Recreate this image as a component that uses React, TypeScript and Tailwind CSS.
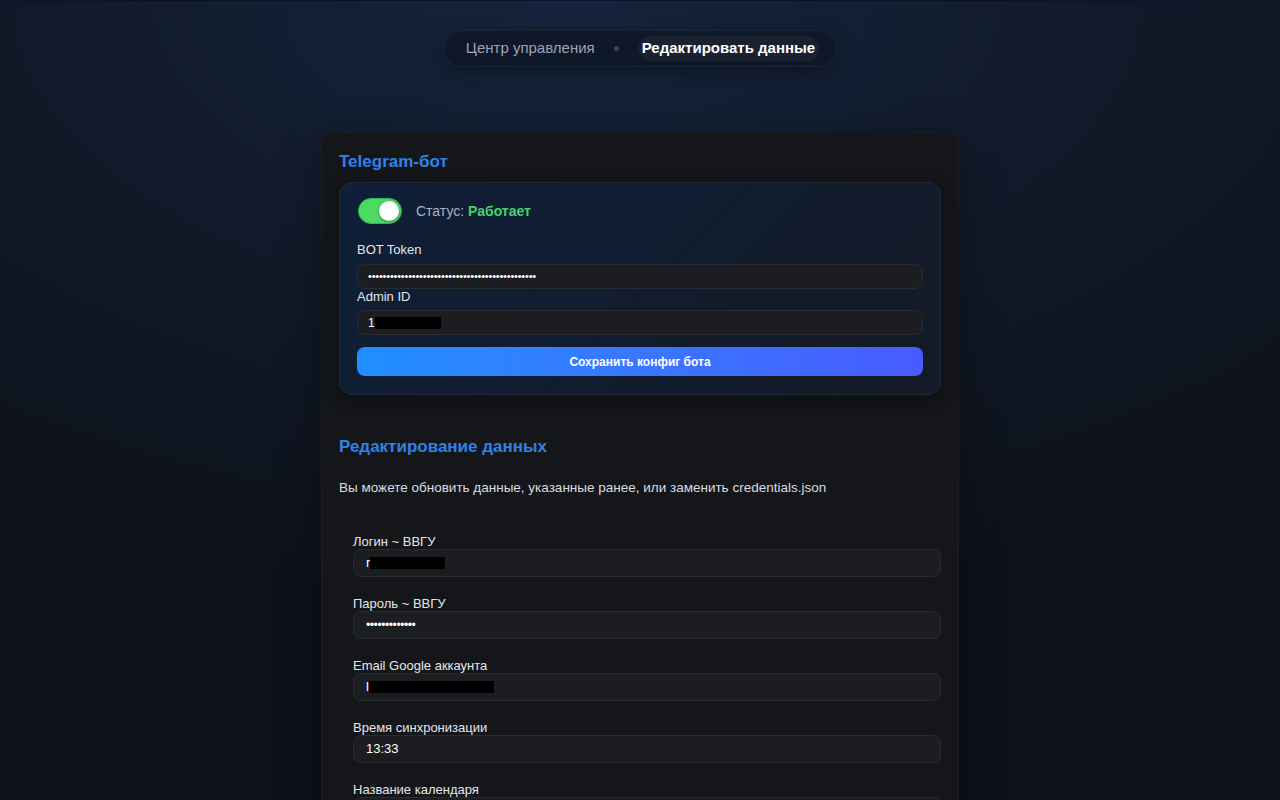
import React from "react"

const font = { fontFamily: '"Liberation Sans", Arial, sans-serif' }

const Redacted = ({ lead, width }: { lead: string; width: number }) => (
  <span className="inline-flex items-center">
    <span>{lead}</span>
    <span
      className="inline-block h-[12px] bg-black"
      style={{ width }}
    />
  </span>
)

const Field = ({
  label,
  children
}: {
  label: string
  children?: React.ReactNode
}) => (
  <div className="flex flex-col">
    <label className="text-[13px] leading-[14px] text-[#e4e6ea]">{label}</label>
    <div className="mt-0 h-[28px] rounded-lg border border-[#2a2b30] bg-[#1c1d21] px-3 flex items-center text-[13px] text-white">
      {children}
    </div>
  </div>
)

export default function App() {
  return (
    <div
      style={font}
      className="min-h-screen w-full border-t border-[#0a1426] bg-[radial-gradient(ellipse_90%_60%_at_45%_0%,#15243d_0%,#111a2a_45%,#0d1118_100%)] pb-16"
    >
      <nav className="flex justify-center pt-[29px]">
        <div className="flex h-[37px] items-center rounded-full border border-white/5 bg-[#0e1828] pl-[22px] pr-[17px] shadow-[0_6px_20px_rgba(0,0,0,0.35)]">
          <span className="text-[15px] text-[#9ba4b4]">Центр управления</span>
          <span className="mx-[19px] h-[5px] w-[5px] rounded-full bg-[#3d4657]" />
          <span className="rounded-full bg-[#1a2232] px-[4px] py-[1px] text-[15px] font-bold text-white">
            Редактировать данные
          </span>
        </div>
      </nav>

      <main className="mx-auto mt-[65px] w-[638px] rounded-xl border border-white/[0.03] bg-[#151619] px-[17px] pt-[17px] pb-10 shadow-[0_10px_40px_rgba(0,0,0,0.35)]">
        <h2 className="text-[17px] font-bold leading-6 text-[#2e82ea]">Telegram-бот</h2>

        <section className="mt-[8px] rounded-[14px] border border-white/[0.06] bg-[linear-gradient(135deg,#0f1f38_0%,#111c2e_55%,#141a26_100%)] pl-[18px] pr-[17px] pt-[15px] pb-[18px] shadow-[0_4px_16px_rgba(0,0,0,0.4)]">
          <div className="flex items-center gap-[14px]">
            <div className="flex h-[26px] w-[44px] items-center justify-end rounded-full border border-[#2fb84f] bg-[#4cd964] pr-[2px]">
              <div className="h-[20px] w-[20px] rounded-full bg-white shadow-[0_1px_3px_rgba(0,0,0,0.35)]" />
            </div>
            <span className="text-[14px] text-[#aab2c0]">
              Статус: <b className="font-bold text-[#41d46c]">Работает</b>
            </span>
          </div>

          <div className="mt-[17px] -ml-px flex flex-col">
            <label className="text-[13px] leading-[18px] text-[#e4e6ea]">BOT Token</label>
            <div className="mt-[5px] flex h-[25px] items-center rounded-lg border border-[#2a2b30] bg-[#1c1d21] px-[10px] text-[11px] tracking-[-0.2px] text-white">
              ••••••••••••••••••••••••••••••••••••••••••••••
            </div>
            <label className="mt-0 text-[13px] leading-[15px] text-[#e4e6ea]">Admin ID</label>
            <div className="mt-[6px] flex h-[25px] items-center rounded-lg border border-[#2a2b30] bg-[#1c1d21] px-[10px] text-[12px] text-white">
              <Redacted lead="1" width={66} />
            </div>
            <button className="mt-[12px] h-[29px] w-full rounded-lg bg-gradient-to-r from-[#1e8fff] to-[#475bff] text-[12px] font-bold text-white">
              Сохранить конфиг бота
            </button>
          </div>
        </section>

        <h2 className="mt-[40px] text-[17px] font-bold leading-6 text-[#2e82ea]">Редактирование данных</h2>
        <p className="mt-[19px] text-[13.5px] leading-5 text-[#d9dce1]">
          Вы можете обновить данные, указанные ранее, или заменить credentials.json
        </p>

        <form className="mt-[37px] flex flex-col gap-[20px] pl-[14px]">
          <Field label="Логин ~ ВВГУ">
            <Redacted lead="r" width={75} />
          </Field>
          <Field label="Пароль ~ ВВГУ">
            <span className="text-[12px] tracking-[-0.4px]">•••••••••••••</span>
          </Field>
          <Field label="Email Google аккаунта">
            <Redacted lead="l" width={125} />
          </Field>
          <Field label="Время синхронизации">13:33</Field>
          <Field label="Название календаря">Расписание ВВГУ</Field>
          <Field label="credentials.json">
            <span className="text-[#8b8f98]">Файл не выбран</span>
          </Field>
          <button className="h-[29px] w-full rounded-lg bg-gradient-to-r from-[#1e8fff] to-[#475bff] text-[12px] font-bold text-white">
            Сохранить данные
          </button>
        </form>
      </main>
    </div>
  )
}
